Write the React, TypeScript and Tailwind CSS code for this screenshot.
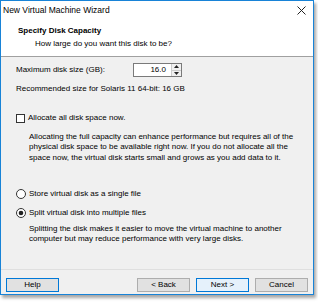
import React from "react";

const font = { fontFamily: '"Liberation Sans", Arial, sans-serif' };

function Radio({ checked }: { checked?: boolean }) {
  return (
    <svg width="10" height="10" viewBox="0 0 10 10" className="shrink-0">
      <circle cx="5" cy="5" r="4.5" fill="#fff" stroke="#333" strokeWidth="1" />
      {checked && <circle cx="5" cy="5" r="2.3" fill="#222" />}
    </svg>
  );
}

export default function App() {
  return (
    <div className="w-[318px] h-[302px] bg-white text-black text-[8px] leading-[10.3px] whitespace-nowrap" style={font}>
      <div className="w-[314px] h-[295px] border border-[#1883d7] flex flex-col shadow-[2px_3px_3px_rgba(0,0,0,0.35)] bg-[#f0f0f0] overflow-hidden">
        {/* Title bar */}
        <div className="bg-white h-[19px] shrink-0 flex items-center justify-between pl-[2px] pr-[7px]">
          <span className="text-[8.5px]">New Virtual Machine Wizard</span>
          <svg width="9" height="9" viewBox="0 0 9 9">
            <path d="M0.5 0.5 L8.5 8.5 M8.5 0.5 L0.5 8.5" stroke="#222" strokeWidth="1" />
          </svg>
        </div>
        {/* Header */}
        <div className="bg-white h-[37px] shrink-0 border-b border-[#a0a0a0] pl-[17px] pt-[6px]">
          <div className="font-bold">Specify Disk Capacity</div>
          <div className="pl-[17px] mt-[2.5px]">How large do you want this disk to be?</div>
        </div>
        {/* Body */}
        <div className="flex-1 pl-[15px] pr-[6px] pt-[6px] overflow-hidden">
          <div className="flex items-center h-[14px]">
            <span className="w-[117px]">Maximum disk size (GB):</span>
            <div className="flex h-[14px] w-[49px] border border-[#7a7a7a] bg-white">
              <div className="flex-1 text-right pr-[5px] leading-[12px]">16.0</div>
              <div className="w-[10px] flex flex-col border-l border-[#ccc] bg-[#f0f0f0]">
                <div className="flex-1 flex items-center justify-center border-b border-[#ccc]">
                  <svg width="5" height="3" viewBox="0 0 5 3"><path d="M0 3 L2.5 0 L5 3 Z" fill="#222" /></svg>
                </div>
                <div className="flex-1 flex items-center justify-center">
                  <svg width="5" height="3" viewBox="0 0 5 3"><path d="M0 0 L2.5 3 L5 0 Z" fill="#222" /></svg>
                </div>
              </div>
            </div>
          </div>
          <div className="mt-[6.5px] h-[10px] leading-[10px]">Recommended size for Solaris 11 64-bit: 16 GB</div>

          <div className="flex items-center gap-[3px] mt-[20px] h-[10px]">
            <div className="w-[9px] h-[9px] border border-[#333] bg-white shrink-0" />
            <span>Allocate all disk space now.</span>
          </div>
          <div className="pl-[13px] mt-[8.5px]">
            <div>Allocating the full capacity can enhance performance but requires all of the</div>
            <div>physical disk space to be available right now. If you do not allocate all the</div>
            <div>space now, the virtual disk starts small and grows as you add data to it.</div>
          </div>

          <div className="flex items-center gap-[3px] mt-[26px] h-[10px]">
            <Radio />
            <span>Store virtual disk as a single file</span>
          </div>
          <div className="flex items-center gap-[3px] mt-[9px] h-[10px]">
            <Radio checked />
            <span>Split virtual disk into multiple files</span>
          </div>
          <div className="pl-[13px] mt-[6px]">
            <div>Splitting the disk makes it easier to move the virtual machine to another</div>
            <div>computer but may reduce performance with very large disks.</div>
          </div>
        </div>
        {/* Footer */}
        <div className="border-t border-[#dfdfdf] h-[25px] shrink-0 flex items-start pt-[8px] pl-[5px] pr-[5px]">
          <button className="w-[53px] h-[14px] border border-[#0078d7] bg-[#e1e1e1] text-[8px] leading-[12px]">Help</button>
          <div className="flex-1" />
          <button className="w-[53px] h-[14px] border border-[#adadad] bg-[#e1e1e1] text-[8px] leading-[12px]">&lt; Back</button>
          <button className="ml-[6px] w-[53px] h-[14px] border border-[#0078d7] bg-[#e5f1fb] text-[8px] leading-[12px]">Next &gt;</button>
          <button className="ml-[6px] w-[53px] h-[14px] border border-[#adadad] bg-[#e1e1e1] text-[8px] leading-[12px]">Cancel</button>
        </div>
      </div>
    </div>
  );
}
